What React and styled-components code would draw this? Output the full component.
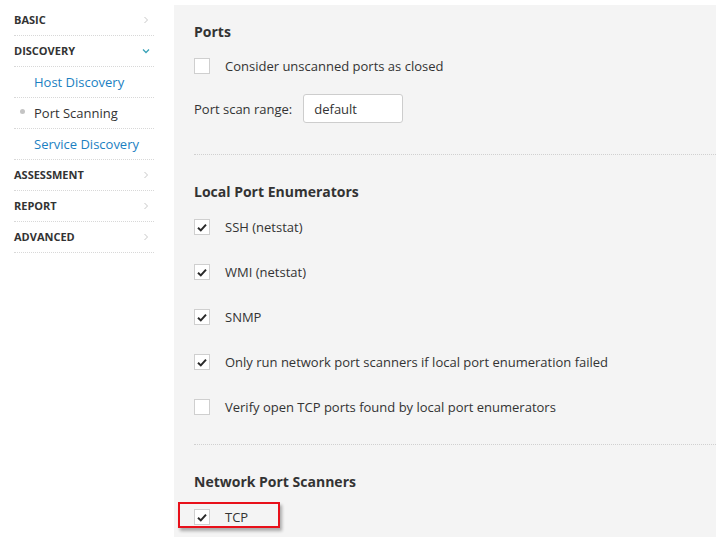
import React from 'react';
import styled, { createGlobalStyle } from 'styled-components';

const GlobalStyle = createGlobalStyle`
    body {
        margin: 0;
        background: #fff;
        font-family: "Open Sans", "Liberation Sans", sans-serif;
        color: #333;
    }
`;

const Layout = styled.div`
    display: flex;
    width: 716px;
    height: 537px;
    overflow: hidden;
`;

const Sidebar = styled.nav`
    width: 140px;
    padding: 5px 20px 0 14px;
    flex-shrink: 0;
`;

const NavRow = styled.div`
    display: flex;
    align-items: center;
    height: 30px;
    border-bottom: 1px dotted #d8d8d8;
    padding-left: ${p => (p.$sub ? '20px' : '0')};
    position: relative;
    font-size: ${p => (p.$sub ? '13px' : '11px')};
    font-weight: ${p => (p.$sub ? 400 : 700)};
    text-transform: ${p => (p.$sub ? 'none' : 'uppercase')};
    color: ${p => (p.$link ? '#1b7fc2' : '#333')};
`;

const NavLabel = styled.span`
    flex: 1;
    margin-top: -1px;
`;

const Bullet = styled.span`
    position: absolute;
    left: 6px;
    top: 11px;
    width: 5px;
    height: 5px;
    border-radius: 50%;
    background: #c4c4c4;
`;

const Chevron = styled.svg`
    width: 8px;
    height: 8px;
    margin-right: 4px;
`;

const Panel = styled.main`
    flex: 1;
    margin-top: 5px;
    background: #f4f4f4;
    padding: 17px 0 0 20px;
`;

const Section = styled.section`
    margin-top: ${p => p.$top || 0}px;
    padding-bottom: ${p => p.$bottom || 0}px;
    border-bottom: ${p => (p.$last ? 'none' : '1px dotted #d0d0d0')};
`;

const Heading = styled.h3`
    margin: 0 0 ${p => p.$gap}px;
    font-size: 14px;
    line-height: 20px;
    font-weight: 700;
    color: #333;
`;

const CheckList = styled.div`
    display: flex;
    flex-direction: column;
    gap: 21px;
`;

const CheckRow = styled.label`
    display: flex;
    align-items: center;
    height: 24px;
    gap: 15px;
    font-size: 13px;
    color: #333;
    position: relative;
`;

const Box = styled.span`
    width: 14px;
    height: 14px;
    border: 1px solid #cfcfcf;
    background: #fff;
    display: flex;
    align-items: center;
    justify-content: center;
`;

const FieldRow = styled.div`
    display: flex;
    align-items: center;
    gap: 11px;
    margin-top: 16px;
    font-size: 13px;
    color: #333;
`;

const TextInput = styled.div`
    width: 88px;
    height: 27px;
    box-sizing: content-box;
    padding: 0 0 0 10px;
    border: 1px solid #cdcdcd;
    border-radius: 3px;
    background: #fff;
    display: flex;
    align-items: center;
    font-size: 13px;
    color: #333;
`;

const Highlight = styled.span`
    position: absolute;
    left: -16px;
    top: -3px;
    width: 98px;
    height: 22px;
    border: 2px solid #e8101a;
    box-shadow: 2px 3px 3px rgba(0, 0, 0, 0.3);
    pointer-events: none;
`;

const Check = ({ on, highlight, children }) => (
    <CheckRow>
        <Box>
            {on && (
                <svg width="10" height="9" viewBox="0 0 10 9">
                    <path d="M1 4.8 L3.8 7.4 L9 1.6" fill="none" stroke="#2a2a2a" strokeWidth="2" />
                </svg>
            )}
        </Box>
        {children}
        {highlight && <Highlight />}
    </CheckRow>
);

const nav = [
    { label: 'Basic', icon: 'right' },
    { label: 'Discovery', icon: 'down' },
    { label: 'Host Discovery', sub: true, link: true },
    { label: 'Port Scanning', sub: true, bullet: true },
    { label: 'Service Discovery', sub: true, link: true },
    { label: 'Assessment', icon: 'right' },
    { label: 'Report', icon: 'right' },
    { label: 'Advanced', icon: 'right' },
];

function App() {
    return (
        <Layout>
            <GlobalStyle />
            <Sidebar>
                {nav.map(item => (
                    <NavRow key={item.label} $sub={item.sub} $link={item.link}>
                        {item.bullet && <Bullet />}
                        <NavLabel>{item.label}</NavLabel>
                        {item.icon === 'right' && (
                            <Chevron viewBox="0 0 8 8">
                                <path d="M2.5 1 L5.5 4 L2.5 7" fill="none" stroke="#c8c8c8" strokeWidth="1" />
                            </Chevron>
                        )}
                        {item.icon === 'down' && (
                            <Chevron viewBox="0 0 8 8">
                                <path d="M1 2.5 L4 5.5 L7 2.5" fill="none" stroke="#3aa3b8" strokeWidth="1.3" />
                            </Chevron>
                        )}
                    </NavRow>
                ))}
            </Sidebar>
            <Panel>
                <Section $bottom={31}>
                    <Heading $gap={12}>Ports</Heading>
                    <Check>Consider unscanned ports as closed</Check>
                    <FieldRow>
                        Port scan range:
                        <TextInput>default</TextInput>
                    </FieldRow>
                </Section>
                <Section $top={27} $bottom={25}>
                    <Heading $gap={13}>Local Port Enumerators</Heading>
                    <CheckList>
                        <Check on>SSH (netstat)</Check>
                        <Check on>WMI (netstat)</Check>
                        <Check on>SNMP</Check>
                        <Check on>Only run network port scanners if local port enumeration failed</Check>
                        <Check>Verify open TCP ports found by local port enumerators</Check>
                    </CheckList>
                </Section>
                <Section $top={27} $last>
                    <Heading $gap={13}>Network Port Scanners</Heading>
                    <Check on highlight>TCP</Check>
                </Section>
            </Panel>
        </Layout>
    );
}

export default App;
